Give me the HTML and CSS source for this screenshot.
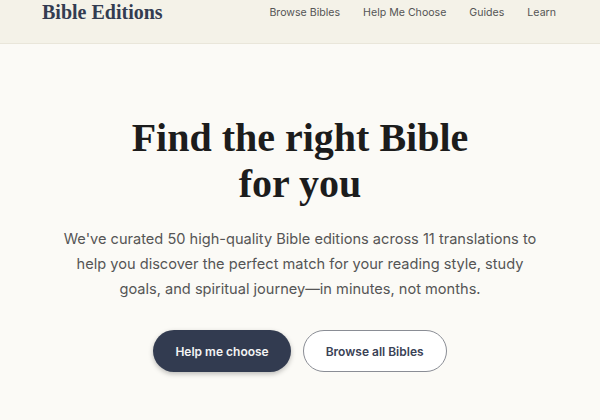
FILE: index.html
```html
<!DOCTYPE html>
<html lang="en">
<head>
<meta charset="utf-8">
<title>Bible Editions</title>
<link rel="stylesheet" href="styles.css">
</head>
<body>
<header class="site-header">
  <div class="header-inner">
    <a class="logo" href="#">Bible Editions</a>
    <nav class="nav">
      <a href="#">Browse Bibles</a>
      <a href="#">Help Me Choose</a>
      <a href="#">Guides</a>
      <a href="#">Learn</a>
    </nav>
  </div>
</header>
<main class="hero">
  <h1 class="hero-title">Find the right Bible<br>for you</h1>
  <p class="hero-text">We've curated 50 high-quality Bible editions across 11 translations to help you discover the perfect match for your reading style, study goals, and spiritual journey—in minutes, not months.</p>
  <div class="actions">
    <a class="btn btn-primary" href="#">Help me choose</a>
    <a class="btn btn-outline" href="#">Browse all Bibles</a>
  </div>
</main>
</body>
</html>
```
FILE: styles.css
```css
* { box-sizing: border-box; }
html, body { margin: 0; padding: 0; }
body {
  background: #fbfaf6;
  font-family: "Inter", "Liberation Sans", sans-serif;
  color: #2b2b2b;
  height: 420px;
  overflow: hidden;
}
a { text-decoration: none; color: inherit; }
.site-header {
  background: #f4f2e8;
  border-bottom: 1px solid #e9e6da;
  height: 44px;
}
.header-inner {
  display: flex;
  justify-content: space-between;
  align-items: flex-start;
  padding: 0 44px 0 42px;
}
.logo {
  font-family: "Liberation Serif", "DejaVu Serif", serif;
  font-weight: 700;
  font-size: 20px;
  line-height: 25px;
  color: #333c51;
}
.nav {
  display: flex;
  gap: 23px;
  padding-top: 5px;
}
.nav a {
  font-size: 10.6px;
  line-height: 16px;
  color: #555;
}
.hero {
  display: flex;
  flex-direction: column;
  align-items: center;
  text-align: center;
  padding-top: 71px;
}
.hero-title {
  margin: 0;
  font-family: "Liberation Serif", "DejaVu Serif", serif;
  font-weight: 700;
  font-size: 40px;
  line-height: 46px;
  color: #1c1c1c;
}
.hero-text {
  margin: 20px 0 0;
  max-width: 480px;
  font-size: 14.6px;
  line-height: 25px;
  color: #555;
}
.actions {
  display: flex;
  gap: 12px;
  margin-top: 28px;
}
.btn {
  display: inline-flex;
  align-items: center;
  justify-content: center;
  height: 42px;
  padding: 0 22px;
  border-radius: 21px;
  font-size: 12px;
  font-weight: 600;
}
.btn-primary {
  background: #323b50;
  color: #f4f4f4;
  box-shadow: 0 2px 5px rgba(0,0,0,0.25);
}
.btn-outline {
  border: 1px solid #8a8d95;
  color: #3a4256;
  background: #fff;
}
```
